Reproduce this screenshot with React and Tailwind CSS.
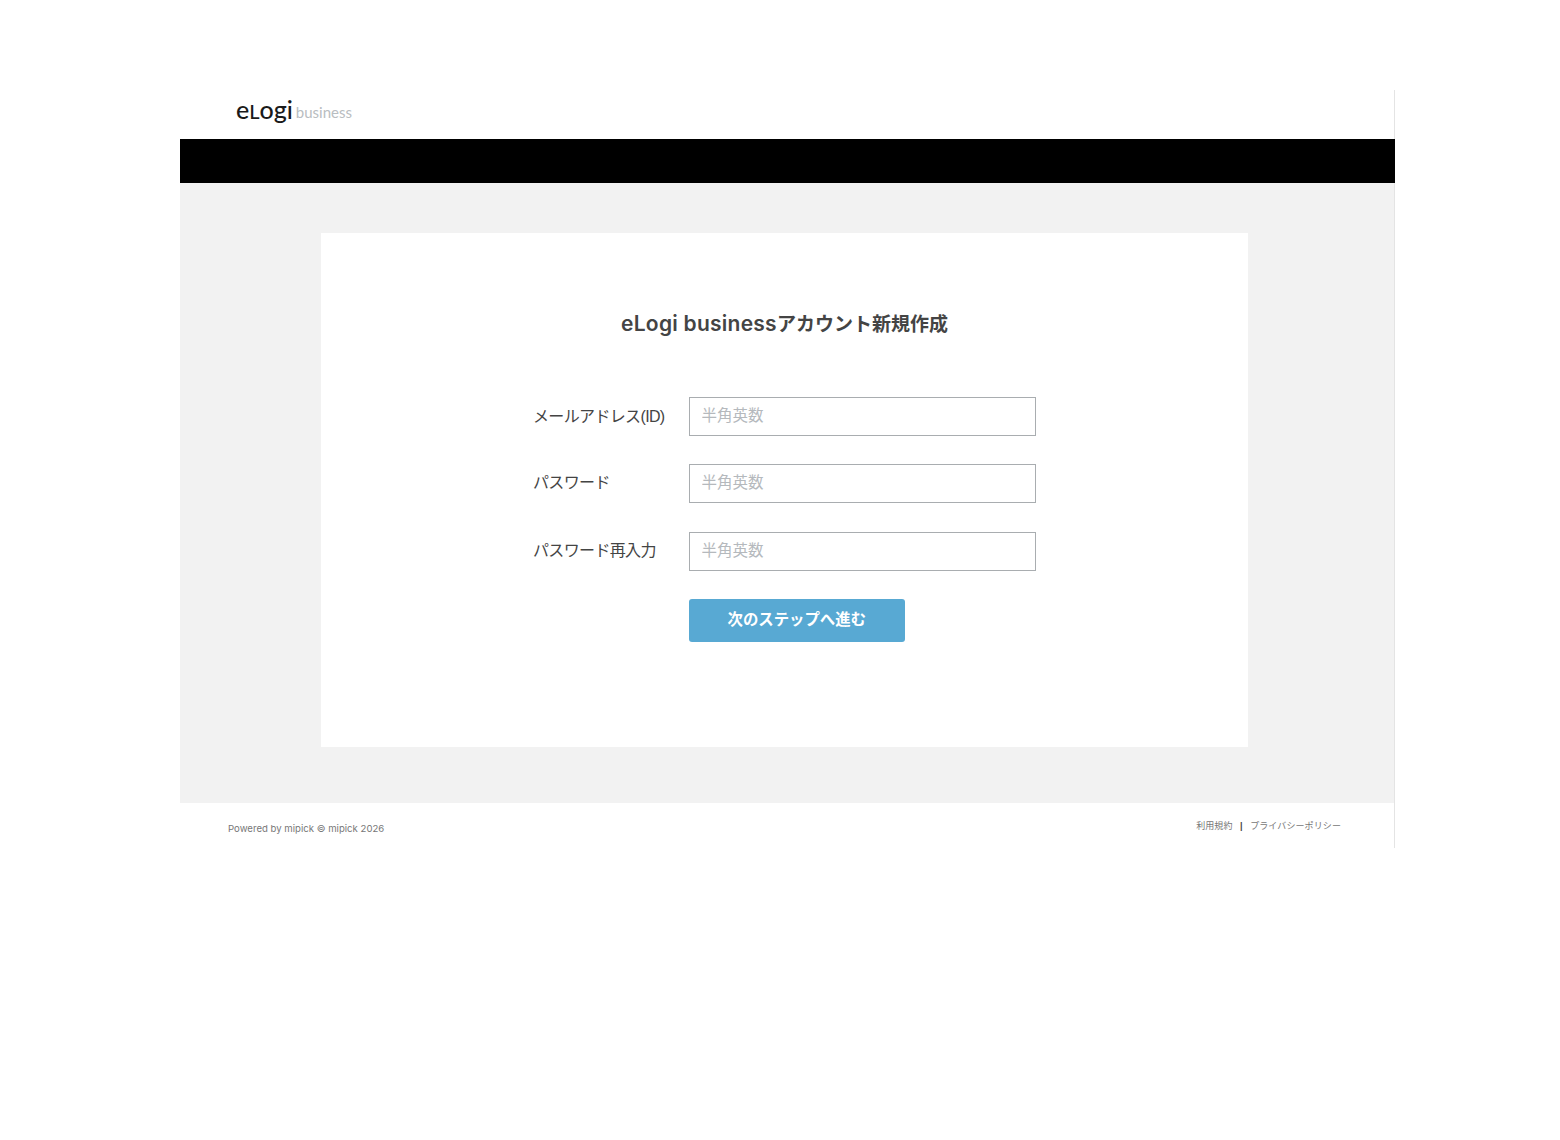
const jp = { fontFamily: '"Liberation Sans", "Noto Sans CJK JP", sans-serif' };

function Row({ label, mb, labelClass }) {
  return (
    <div className={`flex items-center h-[39px] ${mb}`}>
      <label className={`w-[155px] text-[16px] tracking-[-0.65px] text-[#444444] ${labelClass}`}>{label}</label>
      <input
        type="text"
        placeholder="半角英数"
        className="ml-[0.5px] w-[347.5px] h-[39px] border border-[#a9adb0] bg-white px-3 pb-[2px] text-[15.5px] outline-none placeholder:text-[#b5b9bd]"
      />
    </div>
  );
}

export default function App() {
  return (
    <div className="min-h-[1140px] bg-white pt-[90px]" style={jp}>
      <div className="ml-[180px] w-[1215px]">
        <header className="h-[49px] flex items-center pl-[56px] pb-[9px] border-r border-[#e4e4e4]">
          <span className="mb-[2px] text-[25px] leading-none font-medium text-[#1a1a1a] font-['Lato',sans-serif]">
            e<span className="text-[20px]">L</span>ogi
          </span>
          <span className="ml-[3px] mt-[4px] text-[15px] leading-none text-[#b9bdc1] font-['Lato',sans-serif]">business</span>
        </header>
        <div className="h-[44px] bg-black" />
        <main className="h-[620px] bg-[#f2f2f2] pt-[50px] pl-[141px] border-r border-[#e4e4e4]">
          <section className="w-[927px] h-[514px] bg-white pt-[77px] pl-[212px]">
            <h1 className="w-[503px] h-[28px] text-center text-[19px] leading-[28px] font-semibold text-[#444444] font-['Inter','Noto_Sans_CJK_JP',sans-serif]">
              <span className="text-[21px] tracking-[0.25px]">eLogi business</span>アカウント新規作成
            </h1>
            <form className="mt-[59px]">
              <Row label="メールアドレス(ID)" mb="mb-[28px]" labelClass="mt-0" />
              <Row label="パスワード" mb="mb-[29px]" labelClass="-mt-[1px]" />
              <Row label="パスワード再入力" mb="mb-[28px]" labelClass="-mt-[1px]" />
              <div className="pl-[155.5px]">
                <button
                  type="button"
                  className="w-[216.5px] h-[43px] pb-[2px] rounded-[3px] bg-[#58a9d3] text-white text-[15.4px] font-bold"
                >
                  次のステップへ進む
                </button>
              </div>
            </form>
          </section>
        </main>
        <footer className="h-[45px] flex justify-between pl-[48px] pr-[53px] text-[#777777] border-r border-[#e4e4e4]">
          <p className="pt-[19px] text-[9.6px] leading-[14px] font-['Inter',sans-serif]">Powered by mipick © mipick 2026</p>
          <p className="pt-[16px] text-[9px] leading-[14px] tracking-[0.1px]">
            <span>利用規約</span>
            <span className="mx-[7.5px] font-bold text-[#444444]">|</span>
            <span>プライバシーポリシー</span>
          </p>
        </footer>
      </div>
    </div>
  );
}
